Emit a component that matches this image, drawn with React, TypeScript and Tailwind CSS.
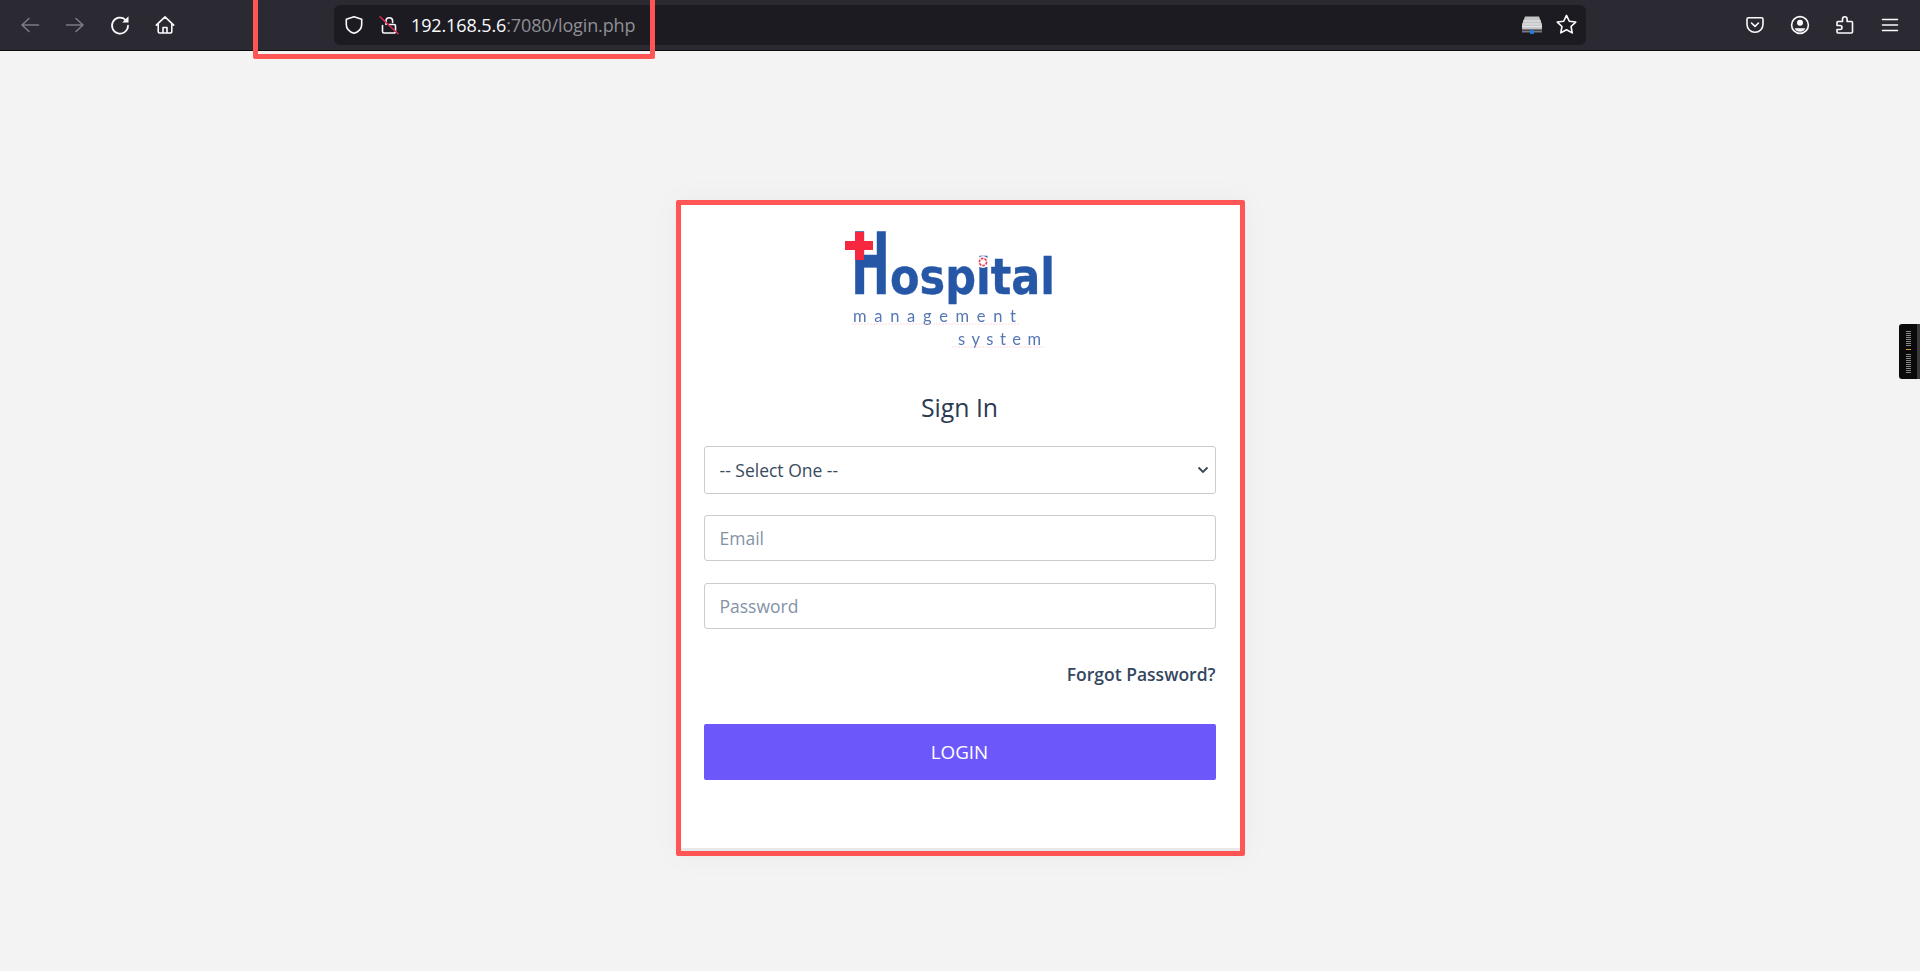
import React from "react";

function Ico({ children, dim }: { children: React.ReactNode; dim?: boolean }) {
  return (
    <svg
      viewBox="0 0 18 18"
      fill="none"
      stroke={dim ? "#7c7b82" : "#fbfbfe"}
      strokeWidth="1.6"
      strokeLinecap="round"
      strokeLinejoin="round"
      className="w-[18px] h-[18px] shrink-0 overflow-visible"
    >
      {children}
    </svg>
  );
}

function Logo() {
  return (
    <svg viewBox="0 -14 225 148" className="block w-[225px] h-[148px] ml-[131px] blur-[0.35px]">
      <text y="72" fill="#2557a6" stroke="#2557a6" strokeWidth="0.4" fontFamily="'DejaVu Sans', sans-serif" fontWeight="700">
        <tspan x="16" fontSize="85" textLength="39" lengthAdjust="spacingAndGlyphs">H</tspan>
        <tspan x="55" fontSize="49" textLength="165" lengthAdjust="spacingAndGlyphs">ospital</tspan>
      </text>
      <circle cx="148" cy="40" r="6" fill="#ffffff" />
      <circle cx="148" cy="40" r="3.6" fill="none" stroke="#f0364f" strokeWidth="1.6" strokeDasharray="2.6 1" />
      <path d="M20 10h9v9h9v9h-9v10h-9V28h-10v-9h10z" fill="#f5283f" />
      <g fill="#5577b4" fontFamily="Lato, sans-serif">
        <text x="18" y="100" fontSize="16.500" textLength="163" lengthAdjust="spacing">management</text>
        <text x="123" y="123" fontSize="16.500" textLength="83" lengthAdjust="spacing">system</text>
      </g>
      <path d="M17 102h168M117 125h92" stroke="#f4b4c0" strokeWidth="0.5" strokeDasharray="2 1" />
    </svg>
  );
}

const inputClass =
  "block w-full h-[46px] border border-[#cccccc] rounded-[3px] bg-white px-[15px] text-[17.5px] text-[#3a4a5e] outline-none placeholder:text-[#8492a6]";

export default function App() {
  return (
    <div className="relative h-[971px] w-full overflow-hidden bg-[#f3f3f3] font-['Open_Sans',sans-serif]">
      <header className="h-[51px] flex items-center bg-[#2b2a33] border-b border-[#0c0c0d] pl-[21px] pr-[21px] pb-[1px]">
        <div className="flex items-center gap-[27px]">
          <Ico dim>
            <path d="M17.500 9H1M8 2.500 1 9l7 6.500" />
          </Ico>
          <Ico dim>
            <path d="M.5 9H17M10 2.500 17 9l-7 6.500" />
          </Ico>
          <Ico>
            <path d="M14.500 3.800A8 8 0 1 0 17 9.500" strokeWidth="1.7" />
            <path d="M11.200 6.500h6.300V.300z" fill="#fbfbfe" stroke="none" />
          </Ico>
          <Ico>
            <path d="M.3 9.200 9 .8l8.700 8.400M2.200 8v7.500a1.500 1.500 0 0 0 1.500 1.500h10.600a1.500 1.500 0 0 0 1.500-1.500V8M7 17v-5.500h4V17" />
          </Ico>
        </div>
        <div className="ml-[160px] w-[1252px] h-[40px] shrink-0 bg-[#1c1b22] rounded-[6px] flex items-center pl-[11px] pr-[10px]">
          <Ico>
            <path d="M9 .8 1.300 3.300v5.200c0 4.500 3.500 7.500 7.700 8.800 4.200-1.300 7.700-4.300 7.700-8.800V3.300z" />
          </Ico>
          <span className="ml-[17px]">
            <Ico>
              <path d="M6 8.500V5a3.300 3.300 0 0 1 6.600 0v1.500" />
              <path d="M9 8.500h5a1.500 1.500 0 0 1 1.500 1.500v5.500a1.500 1.500 0 0 1-1.500 1.500H4a1.500 1.500 0 0 1-1.500-1.500V9.500" />
              <path d="M0 .8l18 17" stroke="#e22850" strokeWidth="1.500" />
            </Ico>
          </span>
          <span className="ml-[13px] text-[18px] leading-[24px] tracking-[-0.12px]">
            <span className="text-[#fbfbfe]">192.168.5.6</span>
            <span className="text-[#8f8f94]">:7080/login.php</span>
          </span>
          <div className="ml-auto flex items-center gap-[15px]">
            <svg viewBox="0 0 20 20" className="w-[20px] h-[20px] -translate-x-[1px]">
              <path d="M3 1.500h14l3 8v5H0v-5z" fill="#c3c5c6" />
              <path d="M1 6h18M.500 9h19M0 11.500h20" stroke="#e6e7e8" strokeWidth="1" />
              <rect x="0" y="15.500" width="8" height="2" fill="#77797c" />
              <rect x="12" y="15.500" width="8" height="2" fill="#77797c" />
              <rect x="8" y="15" width="4" height="4" rx="1" fill="#2a7be0" />
            </svg>
            <svg viewBox="0 0 18 18" fill="none" stroke="#fbfbfe" strokeWidth="1.400" strokeLinejoin="round" className="w-[21px] h-[21px] -ml-[2px] -mr-[1px]">
              <path d="M9 1.200l2.400 5 5.500.700-4 3.800 1 5.500L9 13.500l-4.900 2.700 1-5.500-4-3.800 5.500-.700z" />
            </svg>
          </div>
        </div>
        <div className="ml-auto flex items-center gap-[27px]">
          <Ico>
            <path d="M2.500 1.800h13A1.500 1.500 0 0 1 17 3.300v5a8 8 0 0 1-16 0v-5a1.500 1.500 0 0 1 1.500-1.500z" />
            <path d="M5.500 7 9 10.300 12.500 7" />
          </Ico>
          <Ico>
            <circle cx="9" cy="9" r="8.400" />
            <circle cx="9" cy="6.700" r="3" fill="#fbfbfe" stroke="none" />
            <path d="M3.600 12.200h10.800A6.200 6.200 0 0 1 9 15.800a6.200 6.200 0 0 1-5.400-3.600z" fill="#fbfbfe" stroke="none" />
          </Ico>
          <Ico>
            <path d="M2 5.500h4.500V3a2.300 2.300 0 0 1 4.600 0v2.500h4.400a1 1 0 0 1 1 1V16a1 1 0 0 1-1 1H2a1 1 0 0 1-1-1v-2.500h3a2 2 0 0 0 0-4H1V6.500a1 1 0 0 1 1-1z" />
          </Ico>
          <Ico>
            <path d="M1.500 3.500h15M1.500 9h15M1.500 14.500h15" />
          </Ico>
        </div>
      </header>

      <main className="flex justify-center pt-[149px]">
        <div className="w-[569px] h-[656px] border-[5px] border-[#ff5555] rounded-[2px] shadow-[0_0_30px_rgba(0,0,0,0.04)]">
          <div className="h-full bg-white border-b-[3px] border-[#e8e8e8] pl-[23px] pr-[24px] pt-[3px]">
            <Logo />
            <h1 className="mt-[33px] mb-[21px] text-center text-[24.800px] leading-[36px] font-normal text-[#2c3a52]">Sign In</h1>
            <div className="relative">
              <select
                defaultValue=""
                className="block w-full h-[48px] appearance-none border border-[#cccccc] rounded-[3px] bg-white px-[15px] text-[17.500px] text-[#3a4a5e] outline-none"
              >
                <option value="">-- Select One --</option>
              </select>
              <svg viewBox="0 0 12 8" className="absolute right-[7px] top-[20px] w-[12px] h-[8px]" fill="none" stroke="#3a4450" strokeWidth="1.800">
                <path d="M1.500 1.500 6 6l4.500-4.500" />
              </svg>
            </div>
            <input type="email" placeholder="Email" className={`${inputClass} mt-[21px]`} />
            <input type="password" placeholder="Password" className={`${inputClass} mt-[22px]`} />
            <div className="mt-[33px] text-right text-[17.500px] leading-[24px] font-semibold text-[#34475f]">
              Forgot Password?
            </div>
            <button className="mt-[38px] block w-full h-[56px] bg-[#6c58fa] rounded-[2px] text-white text-[18.800px]">
              LOGIN
            </button>
          </div>
        </div>
      </main>

      <div className="absolute left-[253px] top-[-5px] w-[402px] h-[64px] border-[5px] border-[#ff5555] rounded-[2px]" />

      <div className="absolute right-0 top-[324px] w-[21px] h-[55px] rounded-l-[3px] bg-[#0a0a0a] overflow-hidden flex">
        <svg viewBox="0 0 21 55" className="w-[21px] h-[55px]">
          <rect x="18" width="3" height="55" fill="#3a3a3a" />
          <path
            d="M7 7.500h5M7 9.500h5M7 11.500h5M7 13.500h5M7 15.500h5M7 17.500h5M7 19.500h5M7 21.500h5M7 30.500h5M7 32.500h5M7 34.500h5M7 36.500h5M7 38.500h5M7 40.500h5M7 42.500h5M7 44.500h5M7 46.500h5M7 48.500h5"
            stroke="#8a8a8a"
            strokeWidth="1"
          />
          <path d="M7 25.500h5" stroke="#e09a2a" strokeWidth="1" />
        </svg>
      </div>
    </div>
  );
}
